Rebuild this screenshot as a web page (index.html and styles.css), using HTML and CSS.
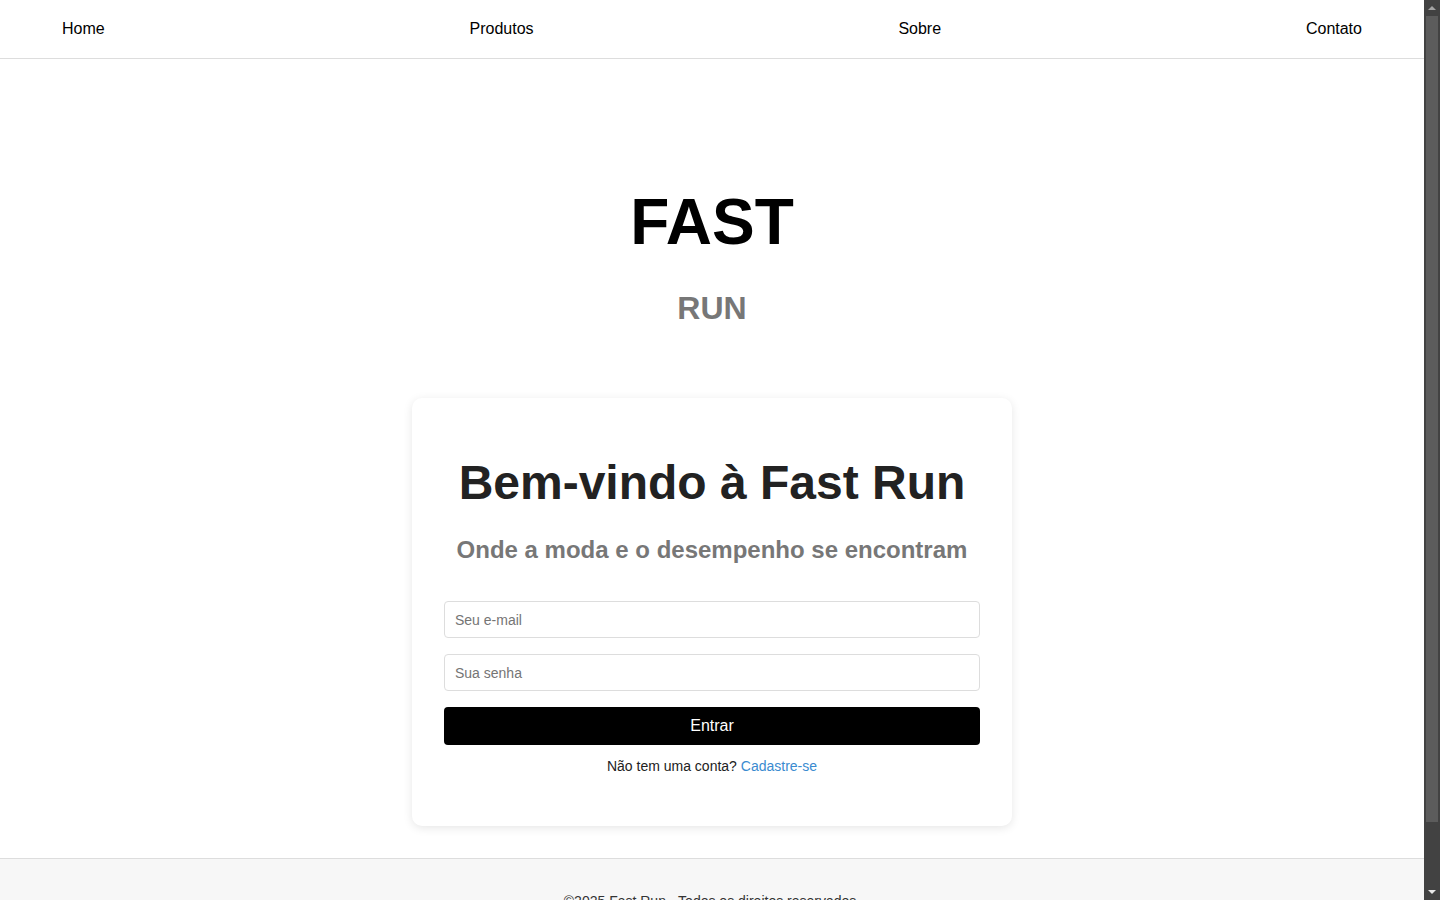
FILE: index.html
```html
<!DOCTYPE html>
<html lang="pt-BR">
<head>
<meta charset="UTF-8">
<title>Fast Run</title>
<link rel="stylesheet" href="styles.css">
</head>
<body>
<div class="window">
  <div class="page">
    <header class="topbar">
      <nav class="nav">
        <a class="nav-link" href="#">Home</a>
        <a class="nav-link" href="#">Produtos</a>
        <a class="nav-link" href="#">Sobre</a>
        <a class="nav-link" href="#">Contato</a>
      </nav>
    </header>
    <main class="main">
      <section class="hero">
        <h1 class="hero-title">FAST</h1>
        <h2 class="hero-sub">RUN</h2>
      </section>
      <section class="card">
        <h1 class="card-title">Bem-vindo à Fast Run</h1>
        <h2 class="card-sub">Onde a moda e o desempenho se encontram</h2>
        <form class="form">
          <input class="field" type="email" placeholder="Seu e-mail">
          <input class="field" type="password" placeholder="Sua senha">
          <button class="btn" type="button">Entrar</button>
        </form>
        <p class="signup">Não tem uma conta? <a class="signup-link" href="#">Cadastre-se</a></p>
      </section>
    </main>
    <footer class="footer">
      <p class="footer-text">©2025 Fast Run - Todos os direitos reservados.</p>
    </footer>
  </div>
  <div class="scrollbar" aria-hidden="true">
    <div class="sb-btn"><span class="sb-arrow-up"></span></div>
    <div class="sb-track"><div class="sb-thumb"></div></div>
    <div class="sb-btn"><span class="sb-arrow-down"></span></div>
  </div>
</div>
</body>
</html>
```
FILE: styles.css
```css
* { box-sizing: border-box; }

html, body {
  margin: 0;
  padding: 0;
  height: 100%;
  overflow: hidden;
  background: #ffffff;
  font-family: Arial, "Liberation Sans", Helvetica, sans-serif;
  color: #000;
}

.window {
  display: flex;
  height: 100vh;
}

.page {
  flex: 1;
  min-width: 0;
  overflow-y: auto;
  scrollbar-width: none;
}

.page::-webkit-scrollbar { display: none; }

/* fake window scrollbar */
.scrollbar {
  width: 16px;
  flex: none;
  display: flex;
  flex-direction: column;
  background: #424242;
}

.sb-btn {
  height: 16px;
  flex: none;
  display: flex;
  align-items: center;
  justify-content: center;
}

.sb-arrow-up,
.sb-arrow-down {
  width: 0;
  height: 0;
  border-left: 4px solid transparent;
  border-right: 4px solid transparent;
}

.sb-arrow-up { border-bottom: 4px solid #a3a3a3; }
.sb-arrow-down { border-top: 4px solid #e8e8e8; }

.sb-track {
  flex: 1;
  display: flex;
  flex-direction: column;
}

.sb-thumb {
  height: 806px;
  margin: 0 2px;
  background: #5c5c5c;
}

.topbar {
  height: 59px;
  border-bottom: 1px solid #dddddd;
  background: #fff;
}

.nav {
  height: 58px;
  display: flex;
  align-items: center;
  justify-content: space-between;
  padding: 0 62px;
}

.nav-link {
  color: #000;
  text-decoration: none;
  font-size: 16px;
}

.main {
  display: flex;
  flex-direction: column;
  align-items: center;
  padding-bottom: 32px;
}

.hero {
  text-align: center;
  padding-top: 126px;
}

.hero-title {
  margin: 0;
  font-size: 64px;
  font-weight: bold;
  color: #000;
}

.hero-sub {
  margin: 31px 0 0;
  font-size: 32px;
  font-weight: bold;
  color: #777777;
}

.card {
  margin-top: 71px;
  width: 600px;
  background: #fff;
  border-radius: 10px;
  box-shadow: 0 2px 10px rgba(0, 0, 0, 0.1);
  padding: 57px 32px 52px;
  text-align: center;
}

.card-title {
  margin: 0;
  font-size: 48px;
  font-weight: bold;
  color: #222222;
}

.card-sub {
  margin: 26px 0 0;
  font-size: 24px;
  font-weight: bold;
  color: #777777;
}

.form {
  margin-top: 37px;
  display: flex;
  flex-direction: column;
  gap: 16px;
}

.field {
  height: 37px;
  padding: 0 10px;
  border: 1px solid #dddddd;
  border-radius: 4px;
  font-family: Arial, "Liberation Sans", sans-serif;
  font-size: 14px;
  color: #000;
  background: #fff;
}

.field::placeholder { color: #757575; }

.btn {
  height: 38px;
  border: none;
  border-radius: 4px;
  background: #000;
  color: #fff;
  font-family: Arial, "Liberation Sans", sans-serif;
  font-size: 16px;
}

.signup {
  margin: 13px 0 0;
  font-size: 14px;
  color: #222;
}

.signup-link {
  color: #3a8bd0;
  text-decoration: none;
}

.footer {
  border-top: 1px solid #dddddd;
  background: #f7f7f7;
  padding: 20px 0 45px;
  text-align: center;
}

.footer-text {
  margin: 14px 0;
  font-size: 14px;
  color: #333;
}
```
